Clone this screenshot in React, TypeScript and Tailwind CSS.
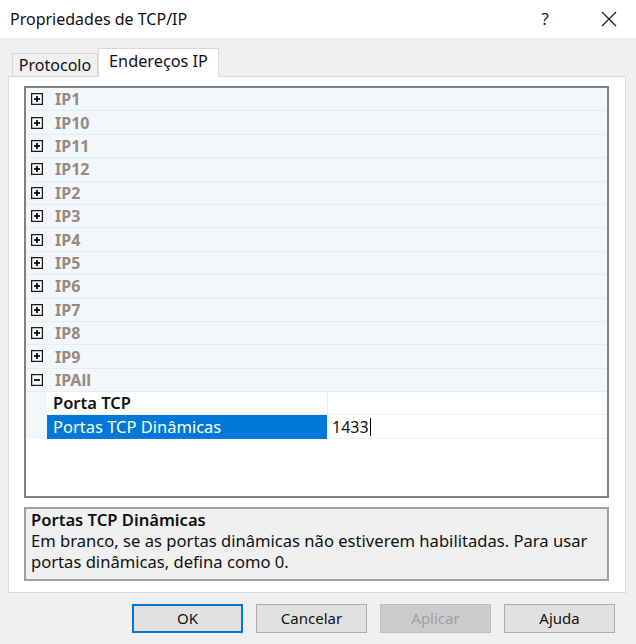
import React from 'react';

const categories = ['IP1', 'IP10', 'IP11', 'IP12', 'IP2', 'IP3', 'IP4', 'IP5', 'IP6', 'IP7', 'IP8', 'IP9'];

function ExpandBox({ open }: { open?: boolean }) {
  return (
    <svg width="12" height="12" viewBox="0 0 12 12" className="shrink-0">
      <rect x="0.6" y="0.6" width="10.8" height="10.8" fill="white" stroke="#1a1a1a" strokeWidth="1.3" />
      <path d="M3 6h6" stroke="#000" strokeWidth="1.7" />
      {!open && <path d="M6 3v6" stroke="#000" strokeWidth="1.7" />}
    </svg>
  );
}

function CategoryRow({ label, open }: { label: string; open?: boolean }) {
  return (
    <div className="flex h-[23.4px] items-center border-b border-[#e8ebf0] bg-[#f3f6fb] pl-[5px]">
      <ExpandBox open={open} />
      <span className="ml-[12px] text-[16px] font-bold text-[#978a7e]">{label}</span>
    </div>
  );
}

function PropRow({ name, value, selected }: { name: string; value?: string; selected?: boolean }) {
  return (
    <div className="flex h-[23.4px] bg-[#f3f6fb]">
      <div className="w-[21px]" />
      <div
        className={
          selected
            ? 'flex w-[280px] items-center bg-[#0078d7] pl-[6px] text-[16.5px] text-white'
            : 'flex w-[280px] items-center border-b border-[#eef0f4] bg-white pl-[6px] text-[16.5px] font-semibold text-[#111]'
        }
      >
        {name}
      </div>
      <div className="flex flex-1 items-center border-b border-l border-[#eef0f4] bg-white pl-[4px] text-[16px] text-[#111]">
        {value}
        {selected && <span className="ml-px inline-block h-[18px] w-px bg-black" />}
      </div>
    </div>
  );
}

function Btn({ label, primary, disabled }: { label: string; primary?: boolean; disabled?: boolean }) {
  let cls = 'flex h-[29px] w-[111px] items-center justify-center text-[15px] ';
  if (primary) cls += 'border-2 border-[#0078d7] bg-[#e1e1e1] text-[#111]';
  else if (disabled) cls += 'border border-[#bfbfbf] bg-[#cccccc] text-[#a0a0a0]';
  else cls += 'border border-[#adadad] bg-[#e1e1e1] text-[#111]';
  return <div className={cls}>{label}</div>;
}

export default function App() {
  return (
    <div
      className="flex h-[644px] w-[636px] flex-col overflow-hidden bg-[#f0f0f0]"
      style={{ fontFamily: '"Noto Sans", "Open Sans", sans-serif' }}
    >
      <div className="flex h-[38px] shrink-0 items-center bg-white pl-[10px]">
        <span className="text-[16px] text-[#111]">Propriedades de TCP/IP</span>
        <span className="ml-auto mr-[52px] text-[17px] text-[#222]">?</span>
        <svg width="16" height="16" viewBox="0 0 16 16" className="mr-[19px]">
          <path d="M1 1L15 15M15 1L1 15" stroke="#222" strokeWidth="1.3" />
        </svg>
      </div>

      <div className="flex flex-col pl-[8px] pt-[10px]">
        <div className="flex items-end pl-[4px]">
          <div className="flex h-[23px] w-[86px] items-center justify-center border border-b-0 border-[#d9d9d9] bg-[#f0f0f0] text-[16px] text-[#111]">
            Protocolo
          </div>
          <div className="relative z-10 -mb-px flex h-[29px] w-[121px] items-center justify-center border border-b-0 border-[#d9d9d9] bg-white pb-[3px] text-[16.3px] text-[#111]">
            Endereços IP
          </div>
        </div>

        <div className="flex h-[517px] w-[618px] flex-col border border-[#d9d9d9] bg-white pl-[15px] pt-[9px]">
          <div className="h-[412px] w-[585px] border-2 border-[#828282] bg-white">
            {categories.map((c) => (
              <CategoryRow key={c} label={c} />
            ))}
            <CategoryRow label="IPAll" open />
            <PropRow name="Porta TCP" />
            <PropRow name="Portas TCP Dinâmicas" value="1433" selected />
          </div>

          <div className="mt-[9px] h-[74px] w-[585px] border-2 border-[#a0a0a0] bg-[#f0f0f0] pl-[5px] text-[16.6px] text-[#111]">
            <div className="font-semibold leading-[21px]">Portas TCP Dinâmicas</div>
            <div className="leading-[21px]">
              Em branco, se as portas dinâmicas não estiverem habilitadas. Para usar
              <br />
              portas dinâmicas, defina como 0.
            </div>
          </div>
        </div>
      </div>

      <div className="mt-[11px] flex justify-end gap-[13px] pr-[21px]">
        <Btn label="OK" primary />
        <Btn label="Cancelar" />
        <Btn label="Aplicar" disabled />
        <Btn label="Ajuda" />
      </div>
    </div>
  );
}
